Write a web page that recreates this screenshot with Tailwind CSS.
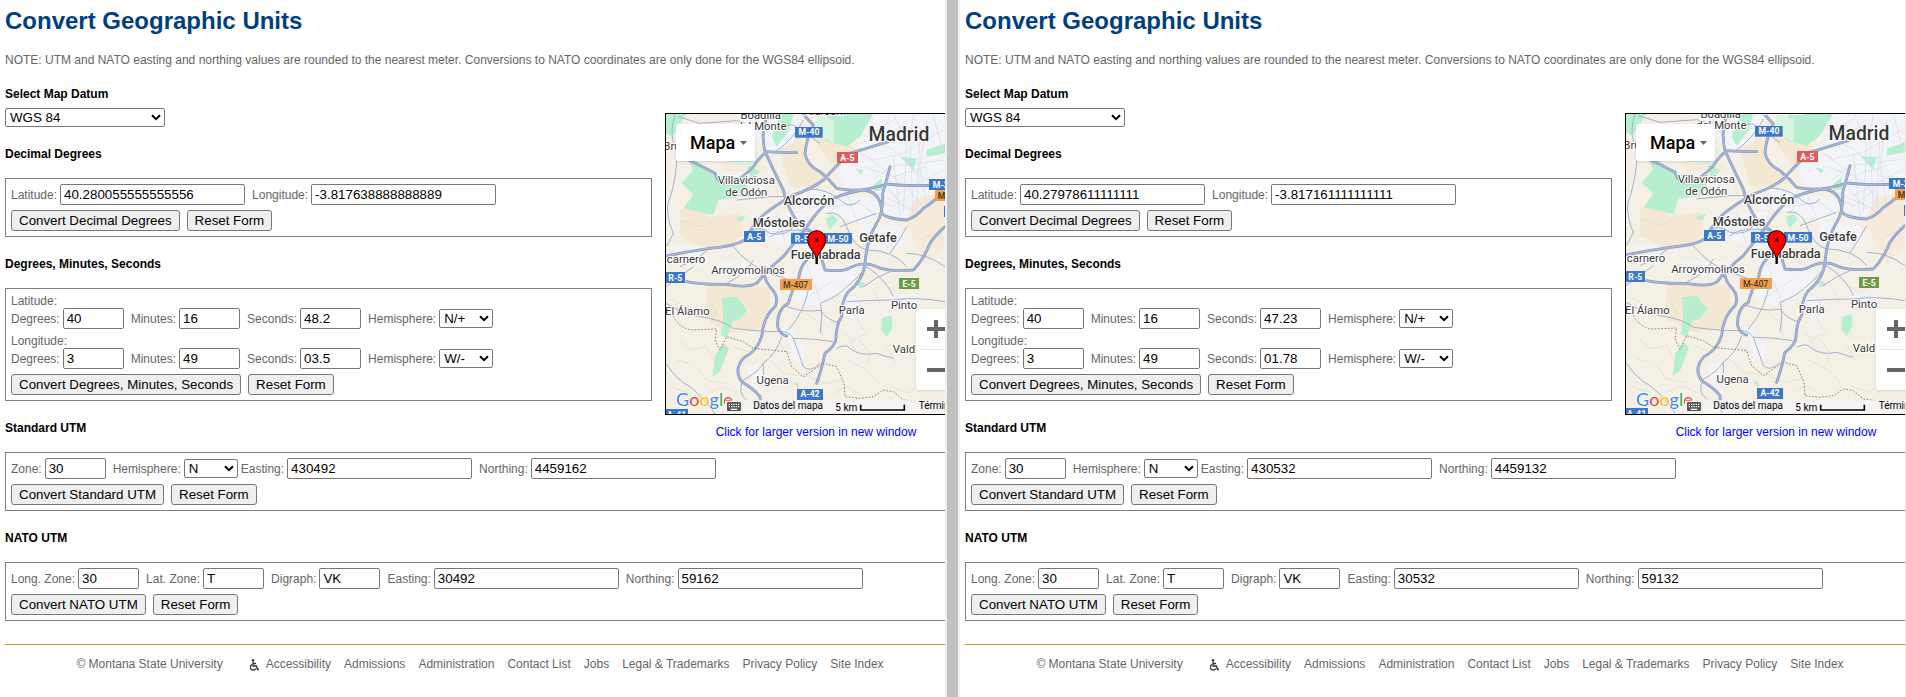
<!DOCTYPE html>
<html lang="en">
<head>
<meta charset="utf-8">
<title>Convert Geographic Units</title>
<script src="https://cdn.jsdelivr.net/npm/@tailwindcss/browser@4"></script>
</head>
<body class="bg-white font-['Liberation_Sans',Arial,sans-serif] text-xs leading-[14px] text-[#666]">

<svg class="hidden" aria-hidden="true">
  <defs>
    <g id="map-art">
      <rect x="0" y="30" width="940" height="930" fill="#f5f0e5"/>
      <!-- farmland -->
      <g fill="#f5e8d3">
        <path d="M60 330L130 320 150 350 240 340 250 400 210 440 120 440 60 410Z"/>
        <path d="M140 555L330 560 330 620 300 690 220 700 170 680 135 650Z"/>
        <path d="M180 190L280 170 340 230 360 290 270 300 220 240Z" opacity=".6"/>
        <path d="M390 60L420 90 440 190 500 240 470 270 390 260 360 160Z"/>
        <path d="M700 280L760 270 850 300 850 440 800 500 760 420Z" opacity=".55"/>
        <path d="M460 120L560 100 590 170 520 200Z"/>
      </g>
      <!-- built-up land -->
      <g fill="#f3f4f7">
        <path d="M560 42H860V270L760 300 740 360 680 350 640 280 560 270 530 210 600 150Z"/>
        <path d="M250 42H430L400 130 330 160 290 120 230 100Z"/>
        <path d="M420 260L530 280 660 300 650 350 610 370 480 330 420 330Z"/>
        <path d="M290 345L440 340 450 440 400 450 330 420 270 400Z"/>
        <path d="M400 480L490 500 590 500 580 560 470 620 400 600 430 520Z"/>
        <path d="M600 370L720 380 730 440 640 450 590 420Z"/>
        <path d="M545 590L590 580 620 620 600 670 550 640Z"/>
        <path d="M370 680L410 690 400 720 365 705Z"/>
        <path d="M165 215H345V290H200Z" opacity=".6"/>
        <path d="M260 800L300 790 330 850 280 860Z"/>
        <path d="M390 720L440 740 430 790 395 770ZM690 590L770 580 770 640 700 620Z"/>
        <path d="M40 430L120 440 130 500 40 490ZM180 480L360 490 330 540 190 520Z" opacity=".7"/>
      </g>
      <!-- woods and parks -->
      <g fill="#b5efcf">
        <path d="M18 42H80L60 75 35 110 18 100Z"/>
        <path d="M75 165L120 190 155 215 175 230 200 235 250 245 262 262 240 290 175 300 160 345 70 325 100 285 65 250 100 210Z"/>
        <path d="M510 42H640L600 110 560 140 500 125 480 80Z"/>
        <path d="M185 595L230 590 262 630 240 660 218 665 200 715 182 705 190 650Z"/>
        <path d="M165 765L190 730 207 745 180 815 158 830Z"/>
        <path d="M665 655L695 645 697 685 680 710 664 690Z"/>
        <path d="M590 548L612 545 617 560 600 565ZM498 355L520 345 533 360 508 390ZM400 845L415 850 415 868Z"/>
        <path d="M585 205L610 210 605 225ZM640 255L665 235 668 270 640 275ZM800 150L855 130V160L800 170ZM720 170L770 175 760 210Z"/>
        <path d="M225 355L258 345 245 365ZM260 190L300 215 275 240Z"/>
        <path d="M360 42H400L385 95 350 140 335 110Z"/>
      </g>
      <path d="M240 120L300 160 270 200 200 190ZM470 42L520 60 520 130 470 100Z" fill="#d9f4e0"/>
      <!-- relief -->
      <g fill="none" stroke="#e2dccd" stroke-width="3" opacity=".7">
        <path d="M40 600l40 20 20 30M60 720l30 30 50-10 20 40M220 740l60 20 20-20M110 800l30 40 60 10M330 780l40 40 70 10M430 820l60 30 60-10M560 780l60 30 40 40M680 740l30 50M30 860l60 20M520 880l40-20 50 30M620 700l-40 20-30-20M440 640l40 30 10 40M680 560l40 20 40-30M780 420l40-20 30 20M60 360l60 20 50-20M190 250l50 40 80-10M520 470l40 30"/>
        <path d="M250 620l-40-30M240 640l-50 10M150 600l20 40-20 30M690 860l60 20 20-20M600 720l30 40-10 30M90 240l40 20 30-20M110 290l30-20M50 780l40 10M140 880l50-20 40 20M360 740l30 20M570 720l20 40M640 570l20 40"/>
      </g>
      <!-- streets -->
      <g fill="none" stroke="#d3dbea" stroke-width="2">
        <path d="M600 50L640 120 700 150 780 230 850 250M580 150L640 180 730 160 850 90M610 200L700 230 800 200M650 280L760 330M700 42L740 130 730 340M760 42L750 120 760 340M800 60L780 200 800 320M560 60L620 110 700 60M620 170L740 260 790 320M640 240L690 200 850 180M700 290L850 210M680 260L740 330M820 42L850 160M600 130L700 100 740 60M650 300L700 320 770 270M700 170L720 350M780 100L770 340"/>
        <path d="M440 290L520 320 600 310 650 350M530 300L510 350M560 280L590 360M300 360L330 420M350 340L380 440M400 350L430 430M280 390L440 400M310 70L400 90M270 60L330 140M250 90L300 50M410 520L470 560M440 490L480 600M430 600L520 540M560 590Q610 570 600 650M570 620L610 690M630 380L700 440M600 420L710 400M700 600L760 590"/>
      </g>
      <!-- secondary roads -->
      <g fill="none" stroke="#a4b1cd" stroke-width="3">
        <path d="M45 45Q30 90 40 125 55 150 48 210 40 270 24 310 18 350 40 400L20 440"/>
        <path d="M55 50L120 70 230 62 290 80 400 75 480 130"/>
        <path d="M150 440Q130 470 60 500M215 435Q270 500 320 515L400 545"/>
        <path d="M18 610Q70 640 120 650 190 660 220 685 300 695 350 695 385 690 400 715 460 715 520 725"/>
        <path d="M385 690Q440 630 450 540M365 710Q350 760 310 790V850"/>
        <path d="M400 715Q420 770 430 800 450 820 480 790"/>
        <path d="M380 620Q440 640 480 630 500 660 540 670M480 700Q490 630 480 610 530 590 550 570 590 540 620 500"/>
        <path d="M530 745Q560 730 570 745 600 770 650 760 680 770 700 775"/>
        <path d="M560 605Q640 600 700 600 770 590 855 605"/>
        <path d="M18 790Q50 840 90 860 140 900 165 942"/>
        <path d="M270 400Q290 370 330 400 380 410 400 380M330 410Q370 380 450 395M230 300L330 290 400 290"/>
        <path d="M340 160Q400 120 430 60M400 290Q430 260 480 270 520 280 540 300 570 330 600 300"/>
        <path d="M500 340Q540 330 560 380 580 440 620 450 700 450 740 500M540 380L650 340"/>
        <path d="M620 500Q680 540 700 590M690 460Q720 420 740 380M740 460Q800 460 855 500"/>
        <path d="M18 560Q60 530 100 500M200 550Q260 520 280 480M610 560Q650 530 690 515"/>
        <path d="M260 900Q230 880 250 840 290 820 310 790"/>
      </g>
      <!-- motorways: dark casing under a lighter core -->
      <use href="#trunk-lines" fill="none" stroke="#8496c0" stroke-width="8.500" stroke-linejoin="round" stroke-linecap="round"/>
      <use href="#trunk-lines" fill="none" stroke="#a6b5d5" stroke-width="5" stroke-linejoin="round" stroke-linecap="round"/>
      <!-- province border -->
      <path d="M35 640Q60 690 100 690L170 687 165 720 180 750 200 710 250 725 280 745 380 755 395 800 430 830 490 790 530 800 552 850 555 890 600 895 640 890 670 870 700 875 730 900 770 905" fill="none" stroke="#8b8377" stroke-width="3" stroke-dasharray="5 5"/>

      <!-- place names -->
      <g font-family="Roboto, sans-serif" fill="#383838" stroke="#fff" stroke-width="6" stroke-linejoin="round" paint-order="stroke" text-anchor="middle" font-size="34">
        <text x="302" y="56">Boadilla</text>
        <text x="304" y="89">del Monte</text>
        <text x="490" y="46">Alarcón</text>
        <text x="10" y="150" text-anchor="start">Bru</text>
        <text x="259" y="252">Villaviciosa</text>
        <text x="259" y="287">de Odón</text>
        <text x="78" y="489">carnero</text>
        <text x="264" y="521">Arroyomolinos</text>
        <text x="82" y="645">El Álamo</text>
        <text x="575" y="642">Parla</text>
        <text x="732" y="627">Pinto</text>
        <text x="732" y="759">Vald</text>
        <text x="338" y="853">Ugena</text>
        <g font-size="38" font-weight="500">
          <text x="447" y="316">Alcorcón</text>
          <text x="357" y="382">Móstoles</text>
          <text x="654" y="427">Getafe</text>
          <text x="497" y="478">Fuenlabrada</text>
        </g>
        <text x="717" y="122" font-size="58" font-weight="500">Madrid</text>
        <text x="400" y="944" fill="#aaa">Illescas</text>
      </g>

      <!-- road shields -->
      <g font-family="Roboto, sans-serif" font-weight="700" font-size="26" text-anchor="middle" fill="#fff">
        <rect x="405" y="81" width="83" height="32" fill="#3b78c9"/><text x="447" y="106">M-40</text>
        <rect x="531" y="156" width="63" height="33" fill="#d95c5f"/><text x="562" y="183">A-5</text>
        <rect x="252" y="393" width="63" height="33" fill="#3b78c9"/><text x="283" y="420">A-5</text>
        <rect x="393" y="399" width="70" height="32" fill="#3b78c9"/><text x="425" y="425">R-5</text>
        <rect x="492" y="399" width="84" height="32" fill="#3b78c9"/><text x="534" y="425">M-50</text>
        <rect x="807" y="237" width="90" height="33" fill="#3b78c9"/><text x="850" y="263">M-30</text>
        <rect x="825" y="270" width="90" height="33" fill="#f1a04f"/><text x="833" y="296" fill="#4b3a1c" text-anchor="start">M-45</text>
        <rect x="852" y="318" width="60" height="33" fill="#3b78c9"/>
        <rect x="14" y="516" width="61" height="33" fill="#3b78c9"/><text x="46" y="543">R-5</text>
        <rect x="360" y="537" width="96" height="33" fill="#f1a04f"/><text x="407" y="564" fill="#4b3a1c" font-weight="500">M-407</text>
        <rect x="717" y="534" width="60" height="33" fill="#6a9c45"/><text x="747" y="560">E-5</text>
        <rect x="411" y="867" width="78" height="33" fill="#3b78c9"/><text x="450" y="892">A-42</text>
        <rect x="14" y="927" width="70" height="33" fill="#3b78c9"/><text x="50" y="953">A-41</text>
      </g>
    </g>
    <path id="trunk-lines" d="M18 468Q80 455 150 445 220 440 255 420 275 380 310 345 340 320 400 285 450 270 490 240 540 185 570 160 620 145 685 125
      M325 42Q300 90 315 155 345 220 370 270 380 320 415 370 455 385 475 430 485 480 495 510 540 515 560 508 610 480 650 500 680 515 760 510 790 480 810 430 830 400 855 380
      M430 42Q445 60 460 75 440 110 435 160 440 195 480 215 510 240 530 265 600 280 680 252 750 260 830 255
      M80 545Q130 555 200 553 260 565 290 550 320 510 370 470 410 420 440 380 480 320 520 295 570 275 610 270 660 275 665 330 660 355 740 360 770 350 790 325 830 300 855 270
      M85 180Q130 200 165 220 175 255 210 250 250 235 280 200 300 170 320 155 370 158 410 158
      M310 505Q315 545 330 560 360 590 345 620 310 650 305 710 290 755 250 775 220 810 245 845 280 865 300 890L305 942
      M440 480Q420 500 415 540 395 570 385 610 350 630 353 680 360 705 380 708
      M690 200Q680 240 668 280 670 340 650 370 620 420 615 490 610 540 565 575 545 600 545 650 530 670 528 710 530 735 495 760 485 810 470 850 455 900
      M742 365L745 470 750 600Q750 650 765 700L775 740M785 860L800 942M820 860V942
      M690 515Q650 550 645 600 620 640 625 700 630 740 670 760 720 775 740 800 760 815 775 830
      M640 42Q660 80 685 120 710 160 750 185 780 190 790 150 800 90 825 42M690 165Q680 190 688 215M825 120Q860 150 855 165M770 160Q790 220 780 260L785 330
      M610 490Q640 540 700 590"/>
  </defs>
</svg>

<div id="frames" class="flex min-h-screen"></div>

<script>
const field = (p, id, label, value, long) => `
  <div class="flex items-center gap-[3px]">
    <label for="${p}-${id}">${label}</label>
    <input id="${p}-${id}" type="text" value="${value}" class="${long ? 'w-[185px]' : 'w-[61px]'} h-[21px] rounded-[2px] border border-[#767676] bg-white px-[3px] text-[10pt] text-black">
  </div>`;

const picker = (id, options, size) => `
  <div class="relative ${size}">
    <select id="${id}" class="block h-[19px] w-full appearance-none rounded-[2px] border border-[#767676] bg-white pl-1 text-[10pt] leading-[17px] text-black">
      ${options.map(o => `<option>${o}</option>`).join('')}
    </select>
    <svg class="pointer-events-none absolute top-[6px] right-1 h-[7px] w-[10px]" viewBox="0 0 10 7" fill="none" stroke="#000" stroke-width="2"><path d="M1 1.2L5 5.2 9 1.2"/></svg>
  </div>`;

const hemisphere = (p, id, options) => `
  <div class="flex items-center gap-[3px]">
    <label for="${p}-${id}">Hemisphere:</label>
    ${picker(`${p}-${id}`, options, 'w-[54px]')}
  </div>`;

const actions = label => `
  <div class="mt-[5px] flex gap-[7px]">
    <button type="button" class="h-[21px] rounded-[3px] border border-[#767676] bg-[#efefef] px-[7px] text-[10pt] leading-[19px] whitespace-nowrap text-black">${label}</button>
    <button type="reset" class="h-[21px] rounded-[3px] border border-[#767676] bg-[#efefef] px-[7px] text-[10pt] leading-[19px] whitespace-nowrap text-black">Reset Form</button>
  </div>`;

const heading = text => `<h2 class="mt-5 mb-[17px] font-bold text-black">${text}</h2>`;

const angle = (p, id, title, [d, m, s], signs) => `
  <p>${title}</p>
  <div class="flex gap-[7px]">
    ${field(p, id + '-d', 'Degrees:', d)}
    ${field(p, id + '-m', 'Minutes:', m)}
    ${field(p, id + '-s', 'Seconds:', s)}
    ${hemisphere(p, id + '-h', signs)}
  </div>`;

const map = v => `
  <div class="relative h-[302px] overflow-hidden border border-black">
    <svg class="block h-full w-full" viewBox="18 ${v.mapTop} 900 900" role="img" aria-label="Map of Madrid">
      <use href="#map-art"/>
    </svg>
    <svg class="absolute inset-0 h-full w-full" viewBox="18 42 900 900" aria-hidden="true">
      <rect x="195" y="900" width="740" height="45" fill="#f5f5f5" opacity=".75"/>
      <text x="48" y="918" font-family="Lato, sans-serif" font-size="54" stroke="#fff" stroke-width="4" paint-order="stroke"><tspan fill="#4285f4">G</tspan><tspan fill="#ea4335">o</tspan><tspan fill="#fbbc04">o</tspan><tspan fill="#4285f4">g</tspan><tspan fill="#34a853">l</tspan><tspan fill="#ea4335">e</tspan></text>
      <rect x="195" y="902" width="60" height="40" fill="#f5f2ec"/>
      <rect x="201" y="906" width="42" height="27" rx="4" fill="#555"/>
      <path d="M206 913h32M206 920h32" stroke="#fff" stroke-width="3.5" stroke-dasharray="4 3"/>
      <path d="M212 928h20" stroke="#fff" stroke-width="3.5"/>
      <g font-family="Roboto, sans-serif" font-size="30" fill="#000">
        <text x="280" y="928">Datos del mapa</text>
        <text x="526" y="932">5 km</text>
        <text x="776" y="928">Términos</text>
      </g>
      <path d="M602 914V930H733V914" fill="none" stroke="#fff" stroke-width="9"/>
      <path d="M602 914V930H733V914" fill="none" stroke="#000" stroke-width="5"/>
      <path d="M470 492V462" stroke="#000" stroke-width="7"/>
      <path d="M470 482C468 455 443 445 443 419A27 27 0 0 1 497 419C497 445 472 455 470 482Z" fill="#f00" stroke="#000" stroke-width="3"/>
      <circle cx="470" cy="420" r="5" fill="#000"/>
    </svg>
    <button type="button" class="absolute top-[10px] left-[10px] flex h-[37px] w-[79px] items-center gap-[5px] rounded-[2px] bg-white pl-[14px] font-['Roboto',sans-serif] text-[18px] font-medium text-black shadow-sm">Mapa
      <svg class="h-1 w-[7px] shrink-0" viewBox="0 0 7 4" fill="#666"><path d="M0 0H7L3.500 4Z"/></svg>
    </button>
    <div class="absolute top-[195px] left-[250px] flex h-[81px] w-10 flex-col divide-y divide-[#e6e6e6] rounded-[2px] bg-white px-[5px] shadow">
      <button type="button" aria-label="Zoom in" class="flex flex-1 items-center justify-center"><svg class="h-[18px] w-[18px] shrink-0" viewBox="0 0 18 18" fill="#666"><path d="M7 0H11V7H18V11H11V18H7V11H0V7H7Z"/></svg></button>
      <button type="button" aria-label="Zoom out" class="flex flex-1 items-center justify-center"><svg class="h-[18px] w-[18px] shrink-0" viewBox="0 0 18 18" fill="#666"><path d="M0 7H18V11H0Z"/></svg></button>
    </div>
  </div>`;

const frame = (p, v) => `
<main class="min-w-0 flex-1 overflow-hidden pl-[5px]">
  <form class="-mr-[22px]">
    <h1 class="pt-[7px] text-2xl leading-7 font-bold text-[#003f7f]">Convert Geographic Units</h1>
    <p class="mt-[18px] whitespace-nowrap">NOTE: UTM and NATO easting and northing values are rounded to the nearest meter. Conversions to NATO coordinates are only done for the WGS84 ellipsoid.</p>
    <div class="mt-5 flex gap-[13px]">
      <div class="min-w-0 flex-1">
        <label for="${p}-datum" class="mb-[7px] block font-bold text-black">Select Map Datum</label>
        ${picker(`${p}-datum`, ['WGS 84'], 'w-[160px]')}
        ${heading('Decimal Degrees')}
        <section class="border border-[#808080] p-[5px]">
          <div class="flex gap-[7px]">
            ${field(p, 'lat', 'Latitude:', v.lat, true)}
            ${field(p, 'lon', 'Longitude:', v.lon, true)}
          </div>
          ${actions('Convert Decimal Degrees')}
        </section>
        ${heading('Degrees, Minutes, Seconds')}
        <section class="border border-[#808080] p-[5px]">
          ${angle(p, 'dlat', 'Latitude:', v.dmsLat, ['N/+', 'S/-'])}
          <div class="mt-[5px]">${angle(p, 'dlon', 'Longitude:', v.dmsLon, ['W/-', 'E/+'])}</div>
          ${actions('Convert Degrees, Minutes, Seconds')}
        </section>
        <h2 class="mt-5 font-bold text-black">Standard UTM</h2>
      </div>
      <div class="mt-[26px] w-[302px] shrink-0">
        ${map(v)}
        <a href="#" class="mt-[10px] block text-center text-[#0000ff]">Click for larger version in new window</a>
      </div>
    </div>
    <section class="mt-[13px] border border-[#808080] p-[5px]">
      <div class="flex gap-[7px]">
        ${field(p, 'zone', 'Zone:', '30')}
        <div class="flex gap-[3px]">
          ${hemisphere(p, 'utm-h', ['N', 'S'])}
          ${field(p, 'utm-e', 'Easting:', v.utm[0], true)}
        </div>
        ${field(p, 'utm-n', 'Northing:', v.utm[1], true)}
      </div>
      ${actions('Convert Standard UTM')}
    </section>
    ${heading('NATO UTM')}
    <section class="border border-[#808080] p-[5px]">
      <div class="flex gap-[7px]">
        ${field(p, 'nato-lon', 'Long. Zone:', '30')}
        ${field(p, 'nato-lat', 'Lat. Zone:', 'T')}
        ${field(p, 'nato-di', 'Digraph:', 'VK')}
        ${field(p, 'nato-e', 'Easting:', v.nato[0], true)}
        ${field(p, 'nato-n', 'Northing:', v.nato[1], true)}
      </div>
      ${actions('Convert NATO UTM')}
    </section>
  </form>
  <footer class="mt-[23px] -mr-[15px] border-t border-[#bfa32c] pt-3">
    <div class="flex justify-center gap-[13px] pr-[5px] whitespace-nowrap">
      <span class="mr-[14px]">© Montana State University</span>
      <a href="#" class="flex gap-[7px]">
        <svg class="mt-[2px] h-3 w-[9px]" viewBox="0 0 9 12" fill="none" stroke="#333" stroke-width="1.300"><circle cx="3" cy="1.300" r="1.200" fill="#333" stroke="none"/><path d="M3 2.500V7H6.500L7.500 10.500H9M3 4.500H6M2 5.500A3 3 0 1 0 6 9.500"/></svg>
        Accessibility</a>
      <a href="#">Admissions</a>
      <a href="#">Administration</a>
      <a href="#">Contact List</a>
      <a href="#">Jobs</a>
      <a href="#">Legal &amp; Trademarks</a>
      <a href="#">Privacy Policy</a>
      <a href="#">Site Index</a>
    </div>
  </footer>
</main>`;

document.getElementById('frames').innerHTML =
  frame('a', { mapTop: 42, lat: '40.280055555555556', lon: '-3.817638888888889', dmsLat: ['40', '16', '48.2'], dmsLon: ['3', '49', '03.5'], utm: ['430492', '4459162'], nato: ['30492', '59162'] }) +
  '<div class="w-[15px] shrink-0 border-r-2 border-l-2 border-[#f0f0f0] bg-[#c0c0c0]"></div>' +
  frame('b', { mapTop: 45, lat: '40.27978611111111', lon: '-3.817161111111111', dmsLat: ['40', '16', '47.23'], dmsLon: ['3', '49', '01.78'], utm: ['430532', '4459132'], nato: ['30532', '59132'] }) +
  '<div class="w-px shrink-0 bg-[#ececec]"></div>';
</script>
</body>
</html>
